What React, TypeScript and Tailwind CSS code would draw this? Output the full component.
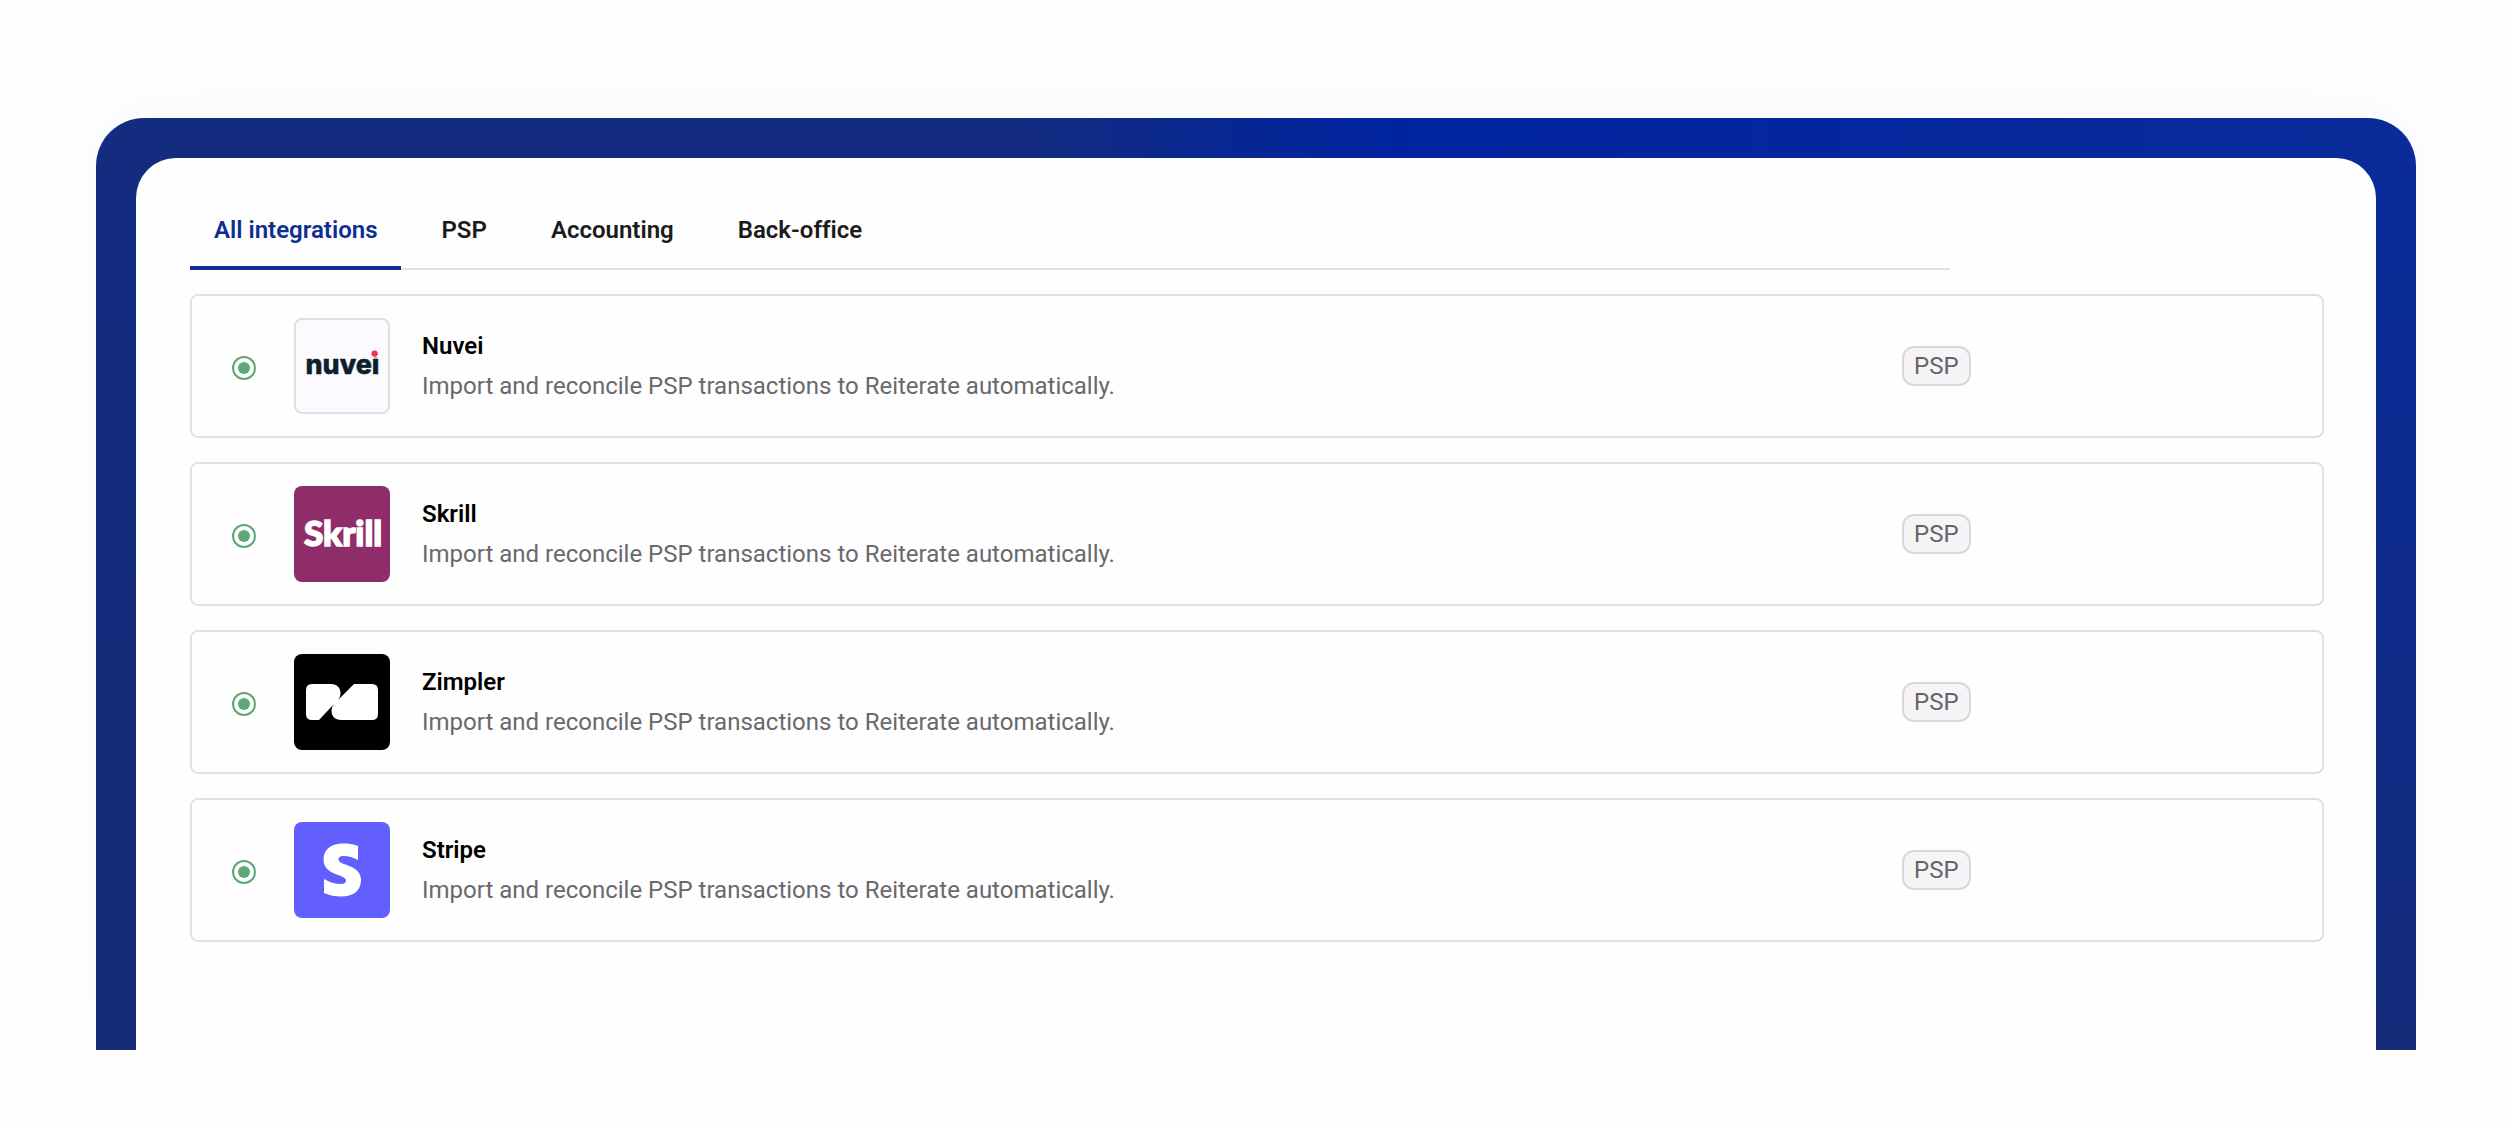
import { useState, type ReactNode } from "react";

const tabs = ["All integrations", "PSP", "Accounting", "Back-office"];

function NuveiLogo() {
  return (
    <svg viewBox="0 0 96 96" className="size-24 rounded-lg border-2 border-[#dfdee2] bg-[#fbfaff]" role="img" aria-label="Nuvei">
      <text x="10" y="56" fontFamily="Inter, sans-serif" fontWeight="800" fontSize="28" fill="#0b1f2c" stroke="#0b1f2c" strokeWidth="0.500">
        nuvei
      </text>
      <rect x="75" y="30" width="14" height="9" fill="#fbfaff" />
      <circle cx="82" cy="35" r="3.300" fill="#ff2a50" />
    </svg>
  );
}

function SkrillLogo() {
  return (
    <svg viewBox="0 0 96 96" className="size-24 rounded-lg bg-[#8f2d6a]" role="img" aria-label="Skrill">
      <text x="10" y="60" fontFamily="Lato, sans-serif" fontWeight="900" fontSize="35" fill="#fff" stroke="#fff" strokeWidth="1.500">
        Skrill
      </text>
    </svg>
  );
}

function ZimplerLogo() {
  return (
    <svg viewBox="0 0 96 96" className="size-24 rounded-lg bg-black" role="img" aria-label="Zimpler">
      <path
        d="M18 30H37C43 30 46.500 34 46.500 39C46.500 42 45.500 44 44 46L60 30H78Q84 30 84 36V60Q84 66 78 66H47C41 66 37.500 62 37.500 57C37.500 54 38.500 52 40 50L25 66H18Q12 66 12 60V36Q12 30 18 30Z"
        fill="#fff"
      />
      <path d="M40 50L44 46" stroke="#fff" strokeWidth="3" />
    </svg>
  );
}

function StripeLogo() {
  return (
    <svg viewBox="0 0 96 96" className="size-24 rounded-lg bg-[#635fff]" role="img" aria-label="Stripe">
      <path
        d="M64 24V38C59 35.500 54 34 50 34C46 34 44.500 35.500 44.500 37.500C44.500 44 67 42 67 58C67 69 59 74.500 47 74.500C41 74.500 35.500 73.500 30 71V57C35 60 41 62 46.500 62C50 62 52 61 52 58.500C52 52 29.500 54 29.500 37.500C29.500 27 38 21.500 49 21.500C54 21.500 59 22 64 24Z"
        fill="#fff"
      />
    </svg>
  );
}

const integrations: { name: string; logo: ReactNode }[] = [
  { name: "Nuvei", logo: <NuveiLogo /> },
  { name: "Skrill", logo: <SkrillLogo /> },
  { name: "Zimpler", logo: <ZimplerLogo /> },
  { name: "Stripe", logo: <StripeLogo /> },
];

function StatusDot() {
  return (
    <svg viewBox="0 0 24 24" className="mt-1 size-6" role="img" aria-label="Active">
      <circle cx="12" cy="12" r="11" fill="none" stroke="#5fa777" strokeWidth="2" />
      <circle cx="12" cy="12" r="6" fill="#5fa777" />
    </svg>
  );
}

export default function App() {
  const [active, setActive] = useState(tabs[0]);
  return (
    <main className="overflow-hidden bg-[#fefefe] px-24 pt-[118px] pb-[74px] font-[Roboto,sans-serif] text-2xl [font-variant-ligatures:none]">
      <div className="rounded-t-[48px] bg-[linear-gradient(180deg,rgba(22,44,116,0)_10%,rgba(22,44,116,0.85)_100%),linear-gradient(90deg,#132c80_0%,#122b80_40%,#0023a0_56%,#0a2b99_100%)] px-10 pt-10 shadow-[0_-16px_64px_rgba(0,140,255,0.03)]">
        <section className="rounded-t-[40px] bg-[#fefefe] pt-9 pr-[52px] pb-[108px] pl-[54px]">
          <div role="tablist" className="flex max-w-[1760px] gap-4 shadow-[inset_0_-2px_0_#e0e0e0]">
            {tabs.map((tab) => (
              <button
                key={tab}
                role="tab"
                type="button"
                aria-selected={tab === active}
                onClick={() => setActive(tab)}
                className={
                  tab === active
                    ? "h-19 border-b-4 border-[#0d2f92] px-6 font-semibold text-[#0d2f92]"
                    : "h-19 border-b-4 border-transparent px-6 font-semibold text-[#1b1b1d]"
                }
              >
                {tab}
              </button>
            ))}
          </div>
          <ul className="mt-6 flex flex-col gap-6">
            {integrations.map(({ name, logo }) => (
              <li key={name} className="flex items-center rounded-lg border-2 border-[#e1e1e1] py-[22px] pl-10">
                <StatusDot />
                <div className="ml-[38px]">{logo}</div>
                <div className="ml-8 flex-1 leading-10">
                  <h2 className="font-semibold text-black">{name}</h2>
                  <p className="text-[#69696b]">Import and reconcile PSP transactions to Reiterate automatically.</p>
                </div>
                <div className="flex w-[420px]">
                  <span className="rounded-xl border-2 border-[#d9d7da] bg-[#f6f4f7] px-[10px] leading-9 text-[#656367]">PSP</span>
                </div>
              </li>
            ))}
          </ul>
        </section>
      </div>
    </main>
  );
}
